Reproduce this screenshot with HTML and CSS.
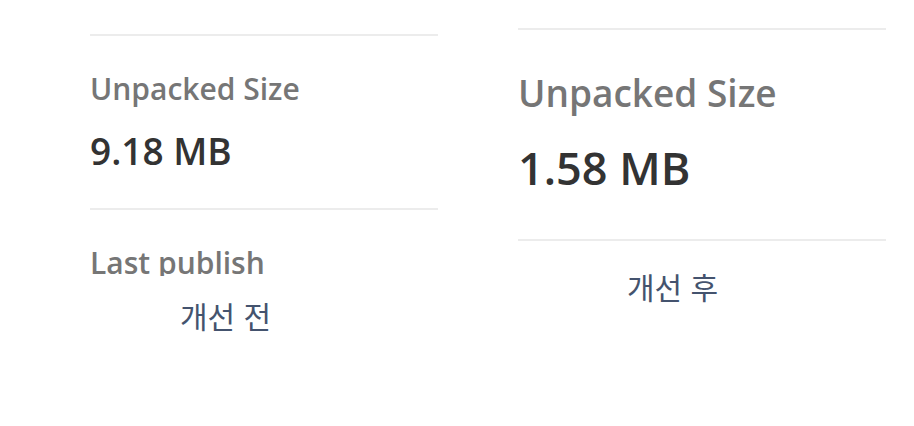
FILE: index.html
```html
<!DOCTYPE html>
<html lang="ko">
<head>
<meta charset="utf-8">
<title>개선 전 / 개선 후</title>
<link rel="stylesheet" href="styles.css">
</head>
<body>
<div class="page">
  <div class="col col-before">
    <div class="shot shot-before">
      <div class="rule rule-first"></div>
      <div class="label">Unpacked Size</div>
      <div class="value">9.18 MB</div>
      <div class="rule rule-second"></div>
      <div class="label label-next">Last publish</div>
    </div>
    <div class="caption">개선 전</div>
  </div>
  <div class="col col-after">
    <div class="shot shot-after">
      <div class="rule rule-first"></div>
      <div class="label">Unpacked Size</div>
      <div class="value">1.58 MB</div>
      <div class="rule rule-second"></div>
    </div>
    <div class="caption">개선 후</div>
  </div>
</div>
</body>
</html>
```
FILE: styles.css
```css
html, body {
  margin: 0;
  padding: 0;
  background: #ffffff;
}

.page {
  display: flex;
  align-items: flex-start;
  width: 914px;
  height: 426px;
  font-family: "Open Sans", "Noto Sans", sans-serif;
}

.col {
  display: flex;
  flex-direction: column;
}

.col-before {
  margin-left: 90px;
  width: 348px;
}

.col-after {
  margin-left: 80px;
  width: 368px;
}

.shot {
  display: flex;
  flex-direction: column;
  overflow: hidden;
}

.shot > * {
  flex-shrink: 0;
}

.rule {
  height: 2px;
  background: #ececec;
}

.label {
  font-weight: 600;
  color: #767676;
  line-height: 1.2;
  white-space: nowrap;
}

.value {
  font-weight: 600;
  color: #333333;
  line-height: 1.2;
  white-space: nowrap;
}

/* before (left) screenshot */
.shot-before {
  height: 276px;
  padding-top: 34px;
  box-sizing: border-box;
}

.shot-before .label {
  font-size: 30px;
  margin-top: 35px;
}

.shot-before .value {
  font-size: 37px;
  margin-top: 22px;
}

.shot-before .rule-second {
  margin-top: 35px;
}

.shot-before .label-next {
  margin-top: 35px;
}

/* after (right) screenshot */
.shot-after {
  padding-top: 28px;
}

.shot-after .label {
  font-size: 37px;
  margin-top: 41px;
}

.shot-after .value {
  font-size: 45px;
  margin-top: 26px;
}

.shot-after .rule-second {
  margin-top: 44px;
}

.caption {
  font-family: "Noto Sans CJK KR", "Noto Sans", sans-serif;
  font-size: 30px;
  line-height: 1.2;
  color: #44536e;
}

.col-before .caption {
  margin-top: 21px;
  margin-left: 90px;
}

.col-after .caption {
  margin-top: 27px;
  margin-left: 109px;
}
```
